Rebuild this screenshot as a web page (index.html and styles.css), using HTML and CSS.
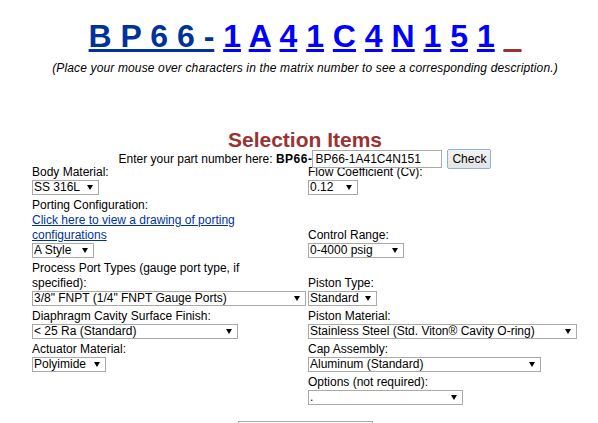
FILE: index.html
```html
<!DOCTYPE html>
<html lang="en">
<head>
    <meta charset="UTF-8">
    <meta name="viewport" content="width=device-width, initial-scale=1.0">
    <title>BP66 Part Number Builder</title>
    <link rel="stylesheet" href="styles.css">
</head>
<body>
    <div class="centered">
        <h1 class="matrix">
            <a href="#" class="prefix">B P 6 6 -</a>
            <a href="#">1</a>
            <a href="#">A</a>
            <a href="#">4</a>
            <a href="#">1</a>
            <a href="#">C</a>
            <a href="#">4</a>
            <a href="#">N</a>
            <a href="#">1</a>
            <a href="#">5</a>
            <a href="#">1</a>
            <a href="#" class="cursor">_</a>
        </h1>
        <p class="hint">(Place your mouse over characters in the matrix number to see a corresponding description.)</p>

        <h2 class="section-title">Selection Items</h2>
        <form class="part-form">
            <span>Enter your part number here: <b>BP66-</b></span>
            <input type="text" class="part-input" value="BP66-1A41C4N151">
            <button type="button" class="check-btn">Check</button>
        </form>
    </div>

    <div class="selection">
        <div class="cell left">
            <div class="field-label">Body Material:</div>
            <span class="select w-body"><select><option>SS 316L</option></select></span>
        </div>
        <div class="cell">
            <div class="field-label">Flow Coefficient (Cv):</div>
            <span class="select w-flow"><select><option>0.12</option></select></span>
        </div>

        <div class="cell left">
            <div class="field-label">Porting Configuration:</div>
            <a href="#" class="field-link">Click here to view a drawing of porting configurations</a>
            <span class="select w-porting"><select><option>A Style</option></select></span>
        </div>
        <div class="cell">
            <div class="field-label">Control Range:</div>
            <span class="select w-range"><select><option>0-4000 psig</option></select></span>
        </div>

        <div class="cell left">
            <div class="field-label">Process Port Types (gauge port type, if specified):</div>
            <span class="select w-ports"><select><option>3/8" FNPT (1/4" FNPT Gauge Ports)</option></select></span>
        </div>
        <div class="cell">
            <div class="field-label">Piston Type:</div>
            <span class="select w-piston"><select><option>Standard</option></select></span>
        </div>

        <div class="cell left">
            <div class="field-label">Diaphragm Cavity Surface Finish:</div>
            <span class="select w-finish"><select><option>&lt; 25 Ra (Standard)</option></select></span>
        </div>
        <div class="cell">
            <div class="field-label">Piston Material:</div>
            <span class="select w-material"><select><option>Stainless Steel (Std. Viton® Cavity O-ring)</option></select></span>
        </div>

        <div class="cell left">
            <div class="field-label">Actuator Material:</div>
            <span class="select w-actuator"><select><option>Polyimide</option></select></span>
        </div>
        <div class="cell">
            <div class="field-label">Cap Assembly:</div>
            <span class="select w-cap"><select><option>Aluminum (Standard)</option></select></span>
        </div>

        <div class="cell left"></div>
        <div class="cell">
            <div class="field-label">Options (not required):</div>
            <span class="select w-options"><select><option>.</option></select></span>
        </div>
    </div>

    <div class="centered">
        <div class="result-box"></div>
    </div>
</body>
</html>
```

FILE: styles.css
```css
body {
    margin: 0;
    font-family: "Liberation Sans", Arial, Helvetica, sans-serif;
    font-size: 12px;
    line-height: 15px;
    color: #000;
    background: #fff;
}

.centered {
    padding-left: 12px;
    text-align: center;
}

/* part number matrix */
.matrix {
    margin: 0;
    padding-top: 18px;
    font-size: 32px;
    line-height: 36px;
    font-weight: bold;
    white-space: nowrap;
}

.matrix a { color: #0000ff; }
.matrix a.prefix { color: #003399; }
.matrix a.cursor { color: #993333; }

.hint {
    margin: 7px 0 0;
    font-style: italic;
    letter-spacing: 0.14px;
}

.section-title {
    margin: 52px 0 0;
    font-size: 21px;
    line-height: 24px;
    color: #993333;
}

.part-form {
    position: relative;
    z-index: 1;
    display: flex;
    justify-content: center;
    align-items: center;
    height: 20px;
    margin: -3px 0 -4px;
}

.part-form b { letter-spacing: 0.5px; }

.part-input {
    box-sizing: border-box;
    width: 130px;
    height: 18px;
    margin: 0 5px 0 0;
    padding: 0 2px;
    border: 1px solid #a9a9a9;
    font: 12px "Liberation Sans", Arial, sans-serif;
    color: #000;
    background: #fff;
}

.check-btn {
    box-sizing: border-box;
    width: 44px;
    height: 20px;
    padding: 0;
    border: 1px solid #8fb2dc;
    border-radius: 2px;
    background: linear-gradient(#f3f3f3, #e3e3e3);
    font: 12px "Liberation Sans", Arial, sans-serif;
    color: #000;
}

/* selection table */
.selection {
    display: grid;
    grid-template-columns: 276px auto;
    row-gap: 3px;
    margin-left: 32px;
}

.cell { align-self: end; }
.cell.left .field-label { max-width: 240px; }

.field-link {
    display: block;
    max-width: 240px;
    color: #003399;
}

.select {
    display: block;
    position: relative;
    height: 15px;
}

.select select {
    appearance: none;
    -webkit-appearance: none;
    box-sizing: border-box;
    width: 100%;
    height: 15px;
    margin: 0;
    padding: 0 0 0 1px;
    border: 1px solid #a9a9a9;
    border-radius: 0;
    background: #fff;
    color: #000;
    font: 12px/13px "Liberation Sans", Arial, sans-serif;
}

.select::after {
    content: "";
    position: absolute;
    right: 6px;
    top: 5px;
    border-left: 3.5px solid transparent;
    border-right: 3.5px solid transparent;
    border-top: 5px solid #000;
    pointer-events: none;
}

.w-body { width: 67px; }
.w-flow { width: 50px; }
.w-porting { width: 62px; }
.w-range { width: 96px; }
.w-ports { width: 274px; }
.w-piston { width: 69px; }
.w-finish { width: 206px; }
.w-material { width: 269px; }
.w-actuator { width: 74px; }
.w-cap { width: 233px; }
.w-options { width: 155px; }

.result-box {
    width: 133px;
    height: 24px;
    margin: 16px auto 0;
    border: 1px solid #a9a9a9;
}
```
